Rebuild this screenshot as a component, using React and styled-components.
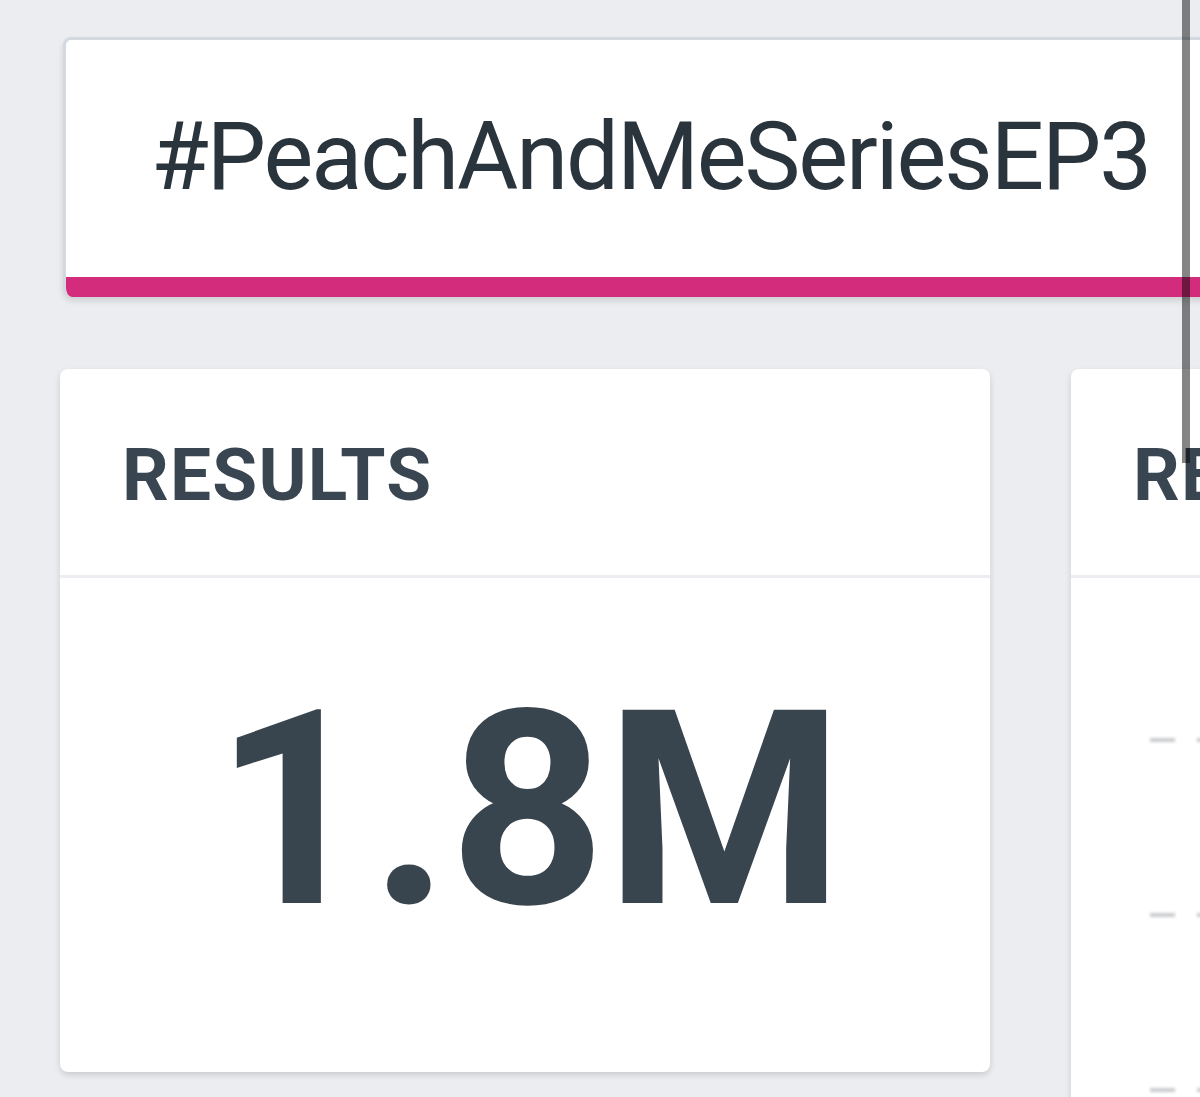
import React from "react";
import styled, { createGlobalStyle } from "styled-components";

const GlobalStyle = createGlobalStyle`
  html, body {
    margin: 0;
    padding: 0;
    background: #ebedf0;
    overflow: hidden;
  }
  body {
    font-family: Roboto, "Noto Sans", Arial, sans-serif;
    color: #38444e;
  }
`;

const Page = styled.div`
  position: relative;
  width: 1200px;
  height: 1097px;
  overflow: hidden;
  padding-top: 37px;
  box-sizing: border-box;
`;

const HashtagCard = styled.div`
  margin-left: 63px;
  width: 1200px;
  background: #fff;
  border-top: 3px solid #d3d9de;
  border-left: 3px solid #d3d9de;
  border-radius: 8px 0 0 9px;
  box-shadow: 0 4px 6px rgba(0, 0, 0, 0.12);
  overflow: hidden;
  display: flex;
  flex-direction: column;
`;

const Hashtag = styled.h1`
  margin: 0;
  height: 237px;
  padding-left: 85px;
  display: flex;
  align-items: center;
  padding-bottom: 4px;
  box-sizing: border-box;
  font-size: 94px;
  font-weight: 400;
  letter-spacing: -2.1px;
  white-space: nowrap;
  color: #2a343c;
`;

const AccentBar = styled.div`
  height: 20px;
  background: #d42c7c;
`;

const CardRow = styled.div`
  display: grid;
  grid-template-columns: 930px 400px;
  align-items: start;
  gap: 81px;
  margin: 72px 0 0 60px;
`;

const StatCard = styled.section`
  background: #fff;
  border-radius: 8px;
  height: ${(p) => p.$height}px;
  box-shadow: 0 3px 6px rgba(0, 0, 0, 0.14);
  display: flex;
  flex-direction: column;
  overflow: hidden;
`;

const StatHeader = styled.div`
  flex-shrink: 0;
  height: 209px;
  padding-left: 62px;
  border-bottom: 3px solid #eceef1;
  display: flex;
  align-items: center;
  padding-top: 5px;
  box-sizing: border-box;
  white-space: nowrap;
`;

const StatTitle = styled.h2`
  margin: 0;
  font-size: 73px;
  font-weight: 700;
  letter-spacing: 1.2px;
  color: #394651;
`;

const StatValue = styled.div`
  flex: 1;
  display: flex;
  align-items: center;
  justify-content: center;
  padding-bottom: 30px;
  padding-left: 8px;
  font-size: 272px;
  font-weight: 700;
  color: #38444e;
`;

const TickList = styled.div`
  flex-shrink: 0;
  display: flex;
  flex-direction: column;
  gap: 171px;
  padding: 160px 0 0 79px;
`;

// placeholder axis ticks of the chart that is still loading
const Tick = styled.div`
  display: flex;
  gap: 22px;
  align-items: center;

  &::before,
  &::after {
    content: "";
    height: 4px;
    background: #c9cbce;
    filter: blur(1.5px);
  }
  &::before {
    width: 25px;
  }
  &::after {
    width: 12px;
  }
`;

const ScrollMark = styled.div`
  position: absolute;
  left: 1182px;
  top: 0;
  width: 8px;
  height: 463px;
  background: rgba(0, 0, 0, 0.48);
`;

export default function App() {
  return (
    <>
      <GlobalStyle />
      <Page>
        <HashtagCard>
          <Hashtag>#PeachAndMeSeriesEP3</Hashtag>
          <AccentBar />
        </HashtagCard>
        <CardRow>
          <StatCard $height={703}>
            <StatHeader>
              <StatTitle>RESULTS</StatTitle>
            </StatHeader>
            <StatValue>1.8M</StatValue>
          </StatCard>
          <StatCard $height={800}>
            <StatHeader>
              <StatTitle>REACH</StatTitle>
            </StatHeader>
            <TickList>
              <Tick />
              <Tick />
              <Tick />
            </TickList>
          </StatCard>
        </CardRow>
        <ScrollMark />
      </Page>
    </>
  );
}
